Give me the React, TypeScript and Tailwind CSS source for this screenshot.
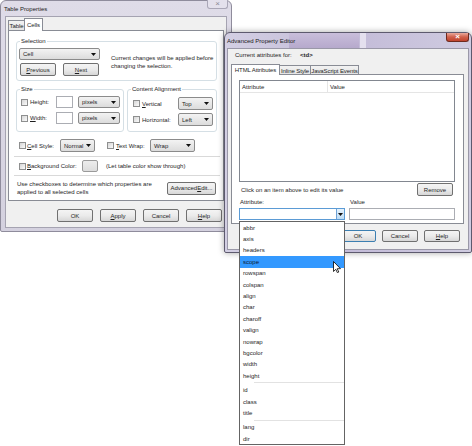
import React from "react";

type Cls = { className?: string; children?: React.ReactNode };

const Arrow = () => (
  <svg width="5" height="3" viewBox="0 0 5 3" className="shrink-0">
    <path d="M0 0h5L2.5 3z" fill="#111" />
  </svg>
);

const Check = ({ className = "" }: Cls) => (
  <span
    className={`block w-[7px] h-[7px] shrink-0 border border-[#8e8f8f] bg-linear-to-br from-[#d6d6d6] to-[#fbfbfb] ${className}`}
  />
);

const Combo = ({ className = "", children }: Cls) => (
  <div
    className={`flex items-center justify-between h-[12px] shrink-0 border border-[#8b8b8b] rounded-[2px] bg-linear-to-b from-[#f3f3f3] to-[#dcdcdc] px-[3px] ${className}`}
  >
    <span>{children}</span>
    <Arrow />
  </div>
);

const Btn = ({ className = "", children }: Cls) => (
  <div
    className={`flex items-center justify-center h-[13px] shrink-0 whitespace-nowrap border border-[#707070] rounded-[2px] bg-linear-to-b from-[#f4f4f4] via-[#ebebeb] to-[#d7d7d7] ${className}`}
  >
    {children}
  </div>
);

const Group = ({ title, className = "", children }: Cls & { title: string }) => (
  <fieldset className={`border border-[#d5dfe5] rounded-[3px] ${className}`}>
    <legend className="ml-[3px] px-[1px] leading-[8px]">{title}</legend>
    {children}
  </fieldset>
);

const Tab = ({ className = "", children, active }: Cls & { active?: boolean }) => (
  <div
    className={`flex items-center justify-center whitespace-nowrap tracking-[-0.1px] border border-b-0 border-[#898c95] ${
      active ? "relative z-10 h-[13px] bg-white" : "h-[11px] bg-linear-to-b from-[#f2f2f2] to-[#e3e3e3]"
    } ${className}`}
  >
    {children}
  </div>
);

const attrs = [
  ["abbr", "axis", "headers", "scope", "rowspan", "colspan", "align", "char", "charoff", "valign", "nowrap", "bgcolor", "width", "height"],
  ["id", "class", "title"],
  ["lang", "dir"],
];

const TableProperties = () => (
  <div className="absolute left-0 top-0 w-[232px] h-[232px] rounded-t-[6px] rounded-b-[2px] border border-[#8f8c9c] bg-linear-to-b from-[#dfdce8] to-[#d4d1df] flex flex-col">
    <div className="relative h-[15px] flex items-center pl-[3px] text-[#1a1a1a]">
      Table Properties
      <div className="absolute right-[3px] top-[-1px] w-[21px] h-[9px] rounded-b-[3px] border border-t-0 border-[#aaa7b7] bg-[#e4e1ec] flex items-center justify-center text-[8px] leading-none text-[#8c8a96]">
        ×
      </div>
    </div>
    <div className="flex-1 mx-[4px] mb-[3px] border border-[#a5a3b1] bg-[#f0f0f0] flex flex-col">
      <div className="flex items-end h-[13px] mt-[1px] pl-[2px]">
        <Tab className="w-[17px]">Table</Tab>
        <Tab active className="w-[19px] -ml-px">Cells</Tab>
      </div>
      <div className="h-[171px] mx-[2px] -mt-px border border-[#898c95] bg-white pl-[7px] pr-[6px] pt-[6px] flex flex-col">
        <Group title="Selection" className="pb-[4px]">
          <div className="flex pl-[2px] pt-[3px]">
            <div className="flex flex-col">
              <Combo className="w-[81px]">Cell</Combo>
              <div className="flex gap-[7px] mt-[3px] ml-[1px]">
                <Btn className="w-[36px]">
                  <u>P</u>revious
                </Btn>
                <Btn className="w-[36px]">
                  <u>N</u>ext
                </Btn>
              </div>
            </div>
            <div className="ml-[11px] mt-[6px] leading-[8px]">
              Current changes will be applied before
              <br />
              changing the selection.
            </div>
          </div>
        </Group>

        <div className="flex gap-[3px] mt-[4px]">
          <Group title="Size" className="w-[108px] pb-[6px]">
            <div className="flex flex-col gap-[4px] pt-[3px] pl-[4px]">
              <div className="flex items-center h-[12px]">
                <Check />
                <span className="ml-[2px] w-[26px]">Height:</span>
                <div className="w-[17px] h-[12px] border border-[#abadb3] bg-white" />
                <Combo className="w-[42px] ml-[5px]">pixels</Combo>
              </div>
              <div className="flex items-center h-[12px]">
                <Check />
                <span className="ml-[2px] w-[26px]">
                  <u>W</u>idth:
                </span>
                <div className="w-[17px] h-[12px] border border-[#abadb3] bg-white" />
                <Combo className="w-[42px] ml-[5px]">pixels</Combo>
              </div>
            </div>
          </Group>
          <Group title="Content Alignment" className="w-[90px] pb-[5px]">
            <div className="flex flex-col gap-[3px] pt-[4px] pl-[5px]">
              <div className="flex items-center h-[13px]">
                <Check />
                <span className="ml-[2px] w-[36px]">
                  <u>V</u>ertical
                </span>
                <Combo className="w-[35px] h-[13px]">Top</Combo>
              </div>
              <div className="flex items-center h-[13px]">
                <Check />
                <span className="ml-[2px] w-[36px]">Horizontal:</span>
                <Combo className="w-[35px] h-[13px]">Left</Combo>
              </div>
            </div>
          </Group>
        </div>

        <div className="flex items-center h-[13px] mt-[7px] pl-[3px]">
          <Check />
          <span className="ml-[1px] w-[33px]">
            <u>C</u>ell Style:
          </span>
          <Combo className="w-[35px] h-[13px]">Normal</Combo>
          <Check className="ml-[12px]" />
          <span className="ml-[2px] w-[34px]">
            <u>T</u>ext Wrap:
          </span>
          <Combo className="w-[45px] h-[13px]">Wrap</Combo>
        </div>

        <div className="h-px bg-[#d9d9d9] mt-[4px] -ml-[2px] -mr-[3px]" />

        <div className="flex items-center h-[12px] mt-[3px] pl-[3px]">
          <Check />
          <span className="ml-[1px] w-[55px]">
            <u>B</u>ackground Color:
          </span>
          <div className="w-[16px] h-[12px] border border-[#9a9a9a] rounded-[2px] bg-linear-to-b from-[#ededed] to-[#dddddd]" />
          <span className="ml-[8px]">(Let table color show through)</span>
        </div>

        <div className="h-px bg-[#d9d9d9] mt-[3px] -ml-[2px] -mr-[3px]" />

        <div className="flex items-center justify-between mt-[4px] pl-[1px] pr-[1px]">
          <div className="leading-[8px]">
            Use checkboxes to determine which properties are
            <br />
            applied to all selected cells
          </div>
          <Btn className="w-[49px]">
            Advanced <u>E</u>dit...
          </Btn>
        </div>
      </div>

      <div className="flex justify-end gap-[7px] mt-[8px] pr-[4px]">
        <Btn className="w-[36px]">OK</Btn>
        <Btn className="w-[36px]">
          <u>A</u>pply
        </Btn>
        <Btn className="w-[36px]">Cancel</Btn>
        <Btn className="w-[36px]">
          <u>H</u>elp
        </Btn>
      </div>
    </div>
  </div>
);

const AdvancedEditor = () => (
  <div className="absolute left-[224px] top-[32px] w-[248px] h-[221px] rounded-t-[6px] rounded-b-[2px] border border-[#5d5a6e] bg-linear-to-r from-[#d3cfe3] via-[#c3bbd8] to-[#cfcbe0] shadow-[0_0_6px_rgba(0,0,0,0.35)] flex flex-col">
    <div className="relative h-[15px] flex items-center pl-[2px] text-[#1a1a1a] overflow-hidden">
      <div className="absolute left-[64px] top-0 w-[70px] h-[15px] bg-linear-to-b from-[#c9bedb] to-[#b6a9cc]" />
      <div className="absolute left-[135px] top-0 w-[6px] h-[15px] bg-[#e4e0ee]" />
      <span className="relative">Advanced Property Editor</span>
      <div className="absolute right-[2px] top-0 w-[23px] h-[9px] rounded-b-[3px] border border-t-0 border-[#6e2a1e] bg-linear-to-b from-[#e9a99c] via-[#d0604b] to-[#c0432c] flex items-center justify-center text-[8px] leading-none font-bold text-white">
        ×
      </div>
    </div>
    <div className="flex-1 mx-[2px] mb-[2px] border border-[#9a98a8] bg-[#f0f0f0] flex flex-col">
      <div className="flex items-center h-[7px] mt-[3px] pl-[7px] leading-[7px]">
        <span className="w-[65px]">Current attributes for:</span>
        <span className="font-bold">&lt;td&gt;</span>
      </div>
      <div className="flex items-end h-[11px] mt-[5px] pl-[3px]">
        <Tab active className="w-[49px] !h-[11px]">HTML Attributes</Tab>
        <Tab className="w-[32px] !h-[10px] -ml-px">Inline Style</Tab>
        <Tab className="w-[49px] !h-[10px] -ml-px">JavaScript Events</Tab>
      </div>
      <div className="w-[233px] h-[150px] ml-[3px] -mt-px border border-[#898c95] bg-white pl-[7px] pr-[8px] pt-[5px] flex flex-col">
        <div className="w-[216px] h-[102px] border border-[#828790] bg-white">
          <div className="flex h-[12px] border-b border-[#e5e5e5] items-center">
            <span className="w-[88px] h-full flex items-center pl-[2px] border-r border-[#e5e5e5]">Attribute</span>
            <span className="pl-[2px]">Value</span>
          </div>
        </div>
        <div className="flex items-center justify-between mt-[1px] pl-[2px]">
          <span>Click on an item above to edit its value</span>
          <Btn className="w-[36px] mr-[2px]">Remove</Btn>
        </div>
        <div className="flex leading-[7px] mt-[3px] pl-[1px]">
          <span className="w-[110px]">Attribute:</span>
          <span>Value</span>
        </div>
        <div className="flex gap-[4px] mt-[2px]">
          <div className="w-[106px] h-[12px] border border-[#5b9bd5] bg-white flex justify-end">
            <div className="w-[8px] h-full border-l border-[#6ea2d6] bg-linear-to-b from-[#e6f2fc] to-[#bcdcf6] flex items-center justify-center">
              <Arrow />
            </div>
          </div>
          <div className="w-[106px] h-[12px] border border-[#abadb3] bg-white" />
        </div>
      </div>
      <div className="flex justify-end gap-[6px] mt-[6px] pr-[8px]">
        <Btn className="w-[36px] !h-[12px] !border-[#3c7fb1] bg-linear-to-b from-[#eaf6fd] to-[#bee6fd]">OK</Btn>
        <Btn className="w-[36px] !h-[12px]">Cancel</Btn>
        <Btn className="w-[36px] !h-[12px]">
          <u>H</u>elp
        </Btn>
      </div>
    </div>
  </div>
);

const AttributeList = () => (
  <div className="absolute left-[239px] top-[221px] w-[106px] border border-[#646464] bg-white flex flex-col">
    {attrs.map((group, gi) => (
      <div key={gi} className="flex flex-col">
        {gi > 0 && (
          <div className="h-[3px] flex items-center pl-[14px]">
            <div className="h-px w-full bg-[#e2e2e2]" />
          </div>
        )}
        {group.map((a) => (
          <div
            key={a}
            className={`h-[11.4px] flex items-center pl-[3px] ${a === "scope" ? "bg-[#3399ff] text-[#0d1a33]" : ""}`}
          >
            {a}
          </div>
        ))}
      </div>
    ))}
  </div>
);

const Cursor = () => (
  <svg className="absolute left-[333px] top-[261px]" width="8" height="12" viewBox="0 0 8 12">
    <path d="M0.5 0.5v10l2.3-2.2 1.6 3.4 1.4-.7-1.6-3.3H7.5z" fill="#fff" stroke="#000" strokeWidth="0.8" />
  </svg>
);

export default function App() {
  return (
    <div className="relative w-[472px] h-[446px] overflow-hidden bg-white text-[6px] leading-[8px] text-[#1e1e1e] font-['Liberation_Sans',Arial,sans-serif]">
      <TableProperties />
      <AdvancedEditor />
      <AttributeList />
      <Cursor />
    </div>
  );
}
